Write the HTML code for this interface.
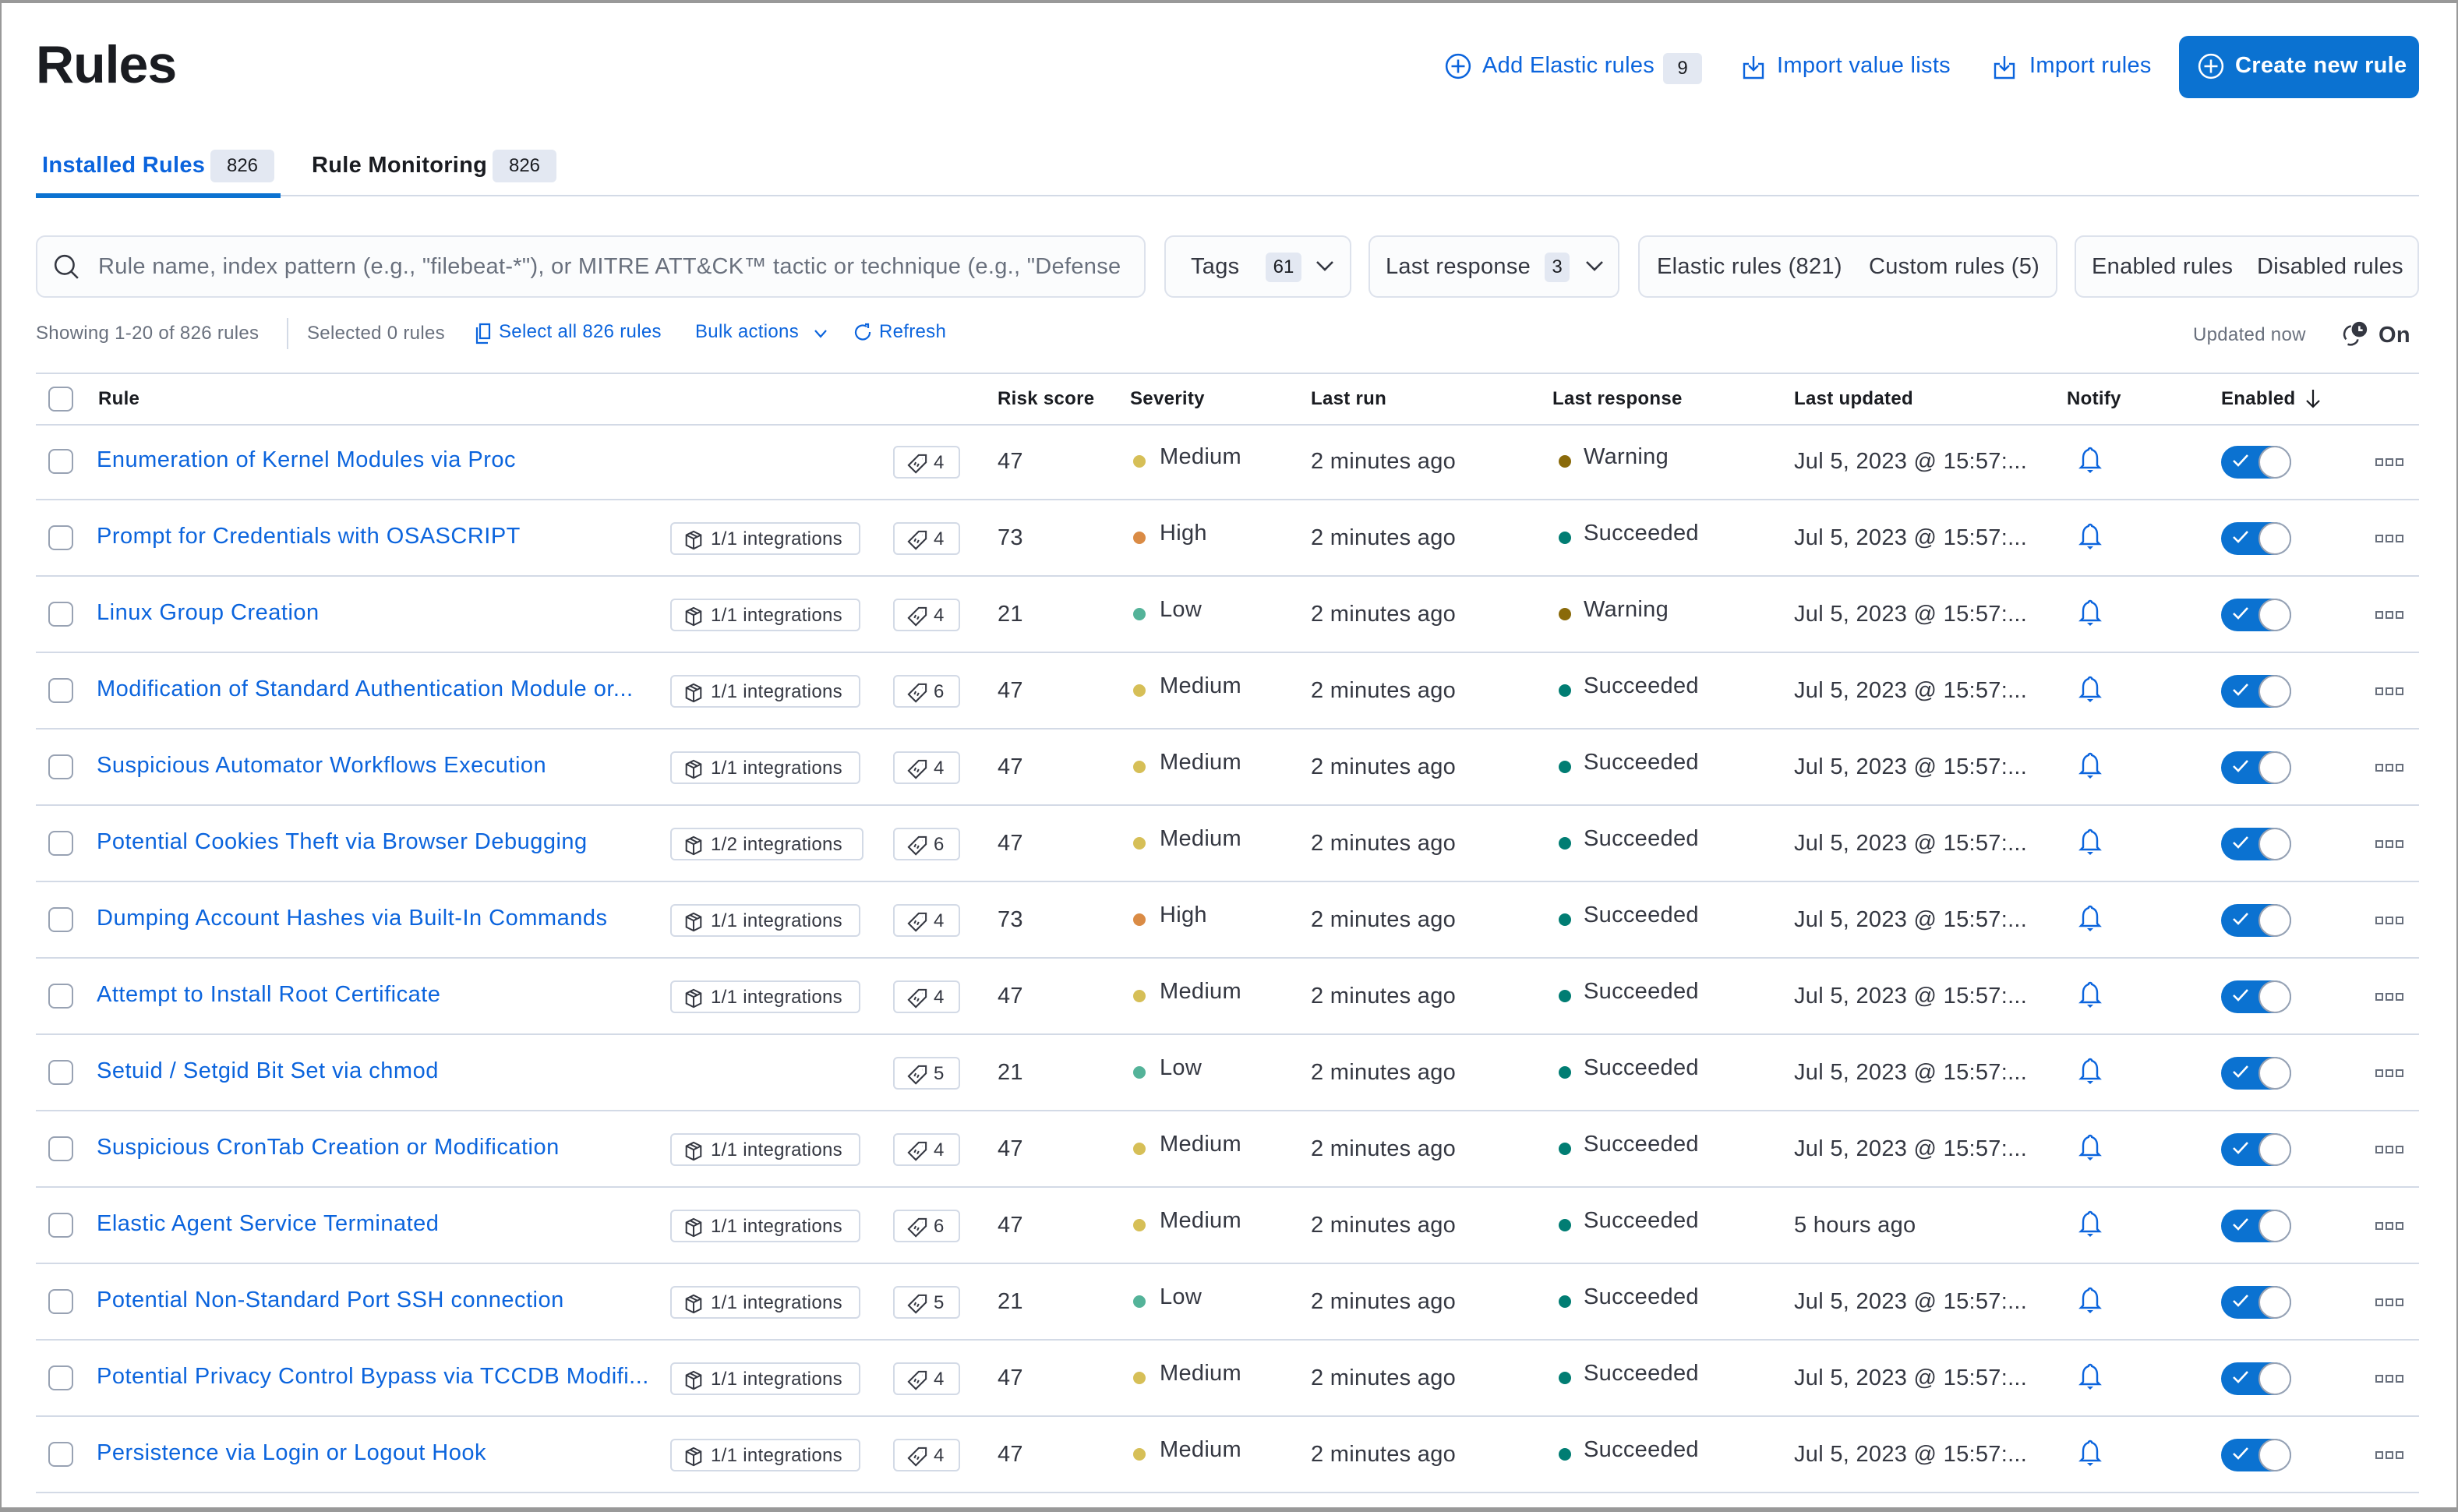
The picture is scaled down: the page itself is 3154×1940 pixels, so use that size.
<!DOCTYPE html>
<html><head><meta charset="utf-8"><style>
*{box-sizing:border-box;margin:0;padding:0}
html,body{width:3154px;height:1940px;overflow:hidden;background:#fff}
#w{zoom:2;width:1577px;height:970px;position:relative;font-family:"Liberation Sans",sans-serif;color:#343741;background:#fff;overflow:hidden;letter-spacing:0.15px}
#frame{position:absolute;left:0;top:0;width:1577px;height:970px;border:1px solid #999;border-top-width:2px;border-bottom-width:3px;pointer-events:none;z-index:5}
.a{position:absolute;white-space:nowrap}
.blue{color:#0b64dd}
.badge{position:absolute;background:#e3e8f2;border-radius:3px;font-size:12px;color:#1a1c21;text-align:center;letter-spacing:0}
.box{position:absolute;border:1px solid #dde2ec;border-radius:6px;background:#fbfcfd;font-size:14.5px;color:#343741}
.row{position:absolute;left:23px;width:1529px;height:49px;border-bottom:1px solid #d3dae6}
.row>*{position:absolute;white-space:nowrap}
.cb{left:8px;top:16px;width:16px;height:16px;border:1px solid #98a2b3;border-radius:4px}
.nm{left:39px;top:15px;font-size:14.5px;color:#0b64dd;letter-spacing:0.25px}
.int{left:407px;top:14px;width:122px;height:21px;border:1px solid #d3dae6;border-radius:3px;font-size:12px;padding:3px 0 0 25px;color:#343741}
.tg{left:550px;top:14px;width:43px;height:21px;border:1px solid #d3dae6;border-radius:3px;font-size:12px;padding:3px 0 0 25px}
.ico{position:absolute;left:8px;top:4px}
.rs{left:617px;top:16px;font-size:14.5px}
.sv{left:721px;top:13px;font-size:14.5px}
.dot{width:8px;height:8px;border-radius:50%;top:20px}
.lr{left:818px;top:16px;font-size:14.5px}
.rp{left:993px;top:13px;font-size:14.5px}
.lu{left:1128px;top:16px;font-size:14.5px}
.bell{left:1310px;top:14px}
.tog{left:1402px;top:14px;width:45px;height:21px;border-radius:11px;background:#0b72d1}
.tog:after{content:"";position:absolute;right:0;top:0;width:21px;height:21px;border-radius:50%;background:#fff;border:1px solid #98a2b3;box-sizing:border-box}
.tog svg{position:absolute;left:7px;top:5px}
.more{left:1501px;top:22px;font-size:0;line-height:0;height:5px}
.more i{display:inline-block;width:5px;height:5px;border:1.2px solid #69707d;margin-right:1.5px;vertical-align:top}
.hd{font-size:12px;font-weight:bold;color:#1a1c21}
</style></head><body><div id="w"><div id="frame"></div>
<div class="a" style="left:23px;top:22px;font-size:34px;font-weight:bold;color:#1a1c21;letter-spacing:-0.5px">Rules</div>

<svg class="a" style="left:927px;top:34px" width="17" height="17" viewBox="0 0 16 16" fill="none" stroke="#0b64dd" stroke-width="1.2"><circle cx="8" cy="8" r="7"/><path d="M8 4v8M4 8h8"/></svg>
<div class="a blue" style="left:951px;top:34px;font-size:14.5px">Add Elastic rules</div>
<div class="badge" style="left:1067px;top:34px;width:25px;height:20px;line-height:20px">9</div>
<svg class="a" style="left:1117px;top:35px" width="16" height="16" viewBox="0 0 16 16" fill="none" stroke="#0b64dd" stroke-width="1.2"><path d="M5 6H2v9h12V6h-3M8 1v9M5 7l3 3 3-3"/></svg>
<div class="a blue" style="left:1140px;top:34px;font-size:14.5px">Import value lists</div>
<svg class="a" style="left:1278px;top:35px" width="16" height="16" viewBox="0 0 16 16" fill="none" stroke="#0b64dd" stroke-width="1.2"><path d="M5 6H2v9h12V6h-3M8 1v9M5 7l3 3 3-3"/></svg>
<div class="a blue" style="left:1302px;top:34px;font-size:14.5px">Import rules</div>
<div class="a" style="left:1398px;top:23px;width:154px;height:40px;background:#0b72d1;border-radius:6px"></div>
<svg class="a" style="left:1410px;top:34px" width="17" height="17" viewBox="0 0 16 16" fill="none" stroke="#fff" stroke-width="1.2"><circle cx="8" cy="8" r="7"/><path d="M8 4v8M4 8h8"/></svg>
<div class="a" style="left:1434px;top:34px;font-size:14.5px;color:#fff;font-weight:bold">Create new rule</div>

<div class="a" style="left:27px;top:98px;font-size:14.5px;font-weight:bold;color:#0b64dd">Installed Rules</div>
<div class="badge" style="left:135px;top:96px;width:41px;height:21px;line-height:21px">826</div>
<div class="a" style="left:200px;top:98px;font-size:14.5px;font-weight:bold;color:#1a1c21">Rule Monitoring</div>
<div class="badge" style="left:316px;top:96px;width:41px;height:21px;line-height:21px">826</div>
<div class="a" style="left:23px;top:125px;width:1529px;height:1px;background:#d3dae6"></div>
<div class="a" style="left:23px;top:124px;width:157px;height:3px;background:#0b72d1"></div>

<div class="box" style="left:23px;top:151px;width:712px;height:40px"></div>
<svg class="a" style="left:34px;top:162px" width="17" height="18" viewBox="0 0 16 16" fill="none" stroke="#343741" stroke-width="1.2"><circle cx="7" cy="7" r="5.5"/><path d="M11 11l4 4"/></svg>
<div class="a" style="left:63px;top:163px;font-size:14.5px;color:#69707d;width:657px;overflow:hidden">Rule name, index pattern (e.g., "filebeat-*"), or MITRE ATT&amp;CK™ tactic or technique (e.g., "Defense Evasion" or "TA0005")</div>

<div class="box" style="left:747px;top:151px;width:120px;height:40px"></div>
<div class="a" style="left:764px;top:163px;font-size:14.5px">Tags</div>
<div class="badge" style="left:812px;top:162px;width:23px;height:19px;line-height:19px">61</div>
<svg class="a" style="left:844px;top:166px" width="12" height="10" viewBox="0 0 12 10" fill="none" stroke="#343741" stroke-width="1.3"><path d="M1 2l5 5 5-5"/></svg>
<div class="box" style="left:878px;top:151px;width:161px;height:40px"></div>
<div class="a" style="left:889px;top:163px;font-size:14.5px">Last response</div>
<div class="badge" style="left:991px;top:162px;width:16px;height:19px;line-height:19px">3</div>
<svg class="a" style="left:1017px;top:166px" width="12" height="10" viewBox="0 0 12 10" fill="none" stroke="#343741" stroke-width="1.3"><path d="M1 2l5 5 5-5"/></svg>
<div class="box" style="left:1051px;top:151px;width:269px;height:40px"></div>
<div class="a" style="left:1063px;top:163px;font-size:14.5px">Elastic rules (821)</div>
<div class="a" style="left:1199px;top:163px;font-size:14.5px">Custom rules (5)</div>
<div class="box" style="left:1331px;top:151px;width:221px;height:40px"></div>
<div class="a" style="left:1342px;top:163px;font-size:14.5px">Enabled rules</div>
<div class="a" style="left:1448px;top:163px;font-size:14.5px">Disabled rules</div>

<div class="a" style="left:23px;top:207px;font-size:12px;color:#69707d">Showing 1-20 of 826 rules</div>
<div class="a" style="left:184px;top:204px;width:1px;height:20px;background:#d3dae6"></div>
<div class="a" style="left:197px;top:207px;font-size:12px;color:#69707d">Selected 0 rules</div>
<svg class="a" style="left:305px;top:207px" width="11" height="14" viewBox="0 0 11 14" fill="none" stroke="#0b64dd" stroke-width="1.1"><path d="M3 1h6v9H3zM1 3v10h7"/></svg>
<div class="a blue" style="left:320px;top:206px;font-size:12px">Select all 826 rules</div>
<div class="a blue" style="left:446px;top:206px;font-size:12px">Bulk actions</div>
<svg class="a" style="left:522px;top:211px" width="9" height="7" viewBox="0 0 9 7" fill="none" stroke="#0b64dd" stroke-width="1.1"><path d="M1 1l3.5 4L8 1"/></svg>
<svg class="a" style="left:548px;top:207px" width="11" height="12" viewBox="0 0 11 12" fill="none" stroke="#0b64dd" stroke-width="1.1"><path d="M8 2.5A4.5 4.5 0 1 0 10 6M7 1h2v2.5"/></svg>
<div class="a blue" style="left:564px;top:206px;font-size:12px">Refresh</div>
<div class="a" style="left:1407px;top:208px;font-size:12px;color:#69707d">Updated now</div>
<svg class="a" style="left:1502px;top:206px" width="17" height="17" viewBox="0 0 16 16" fill="none" stroke="#343741" stroke-width="1.2"><path d="M6 3a5 5 0 0 0-3 8M4 14c3 1 6-1 6-3"/><circle cx="11" cy="5" r="4" fill="#343741"/><path d="M11 3v2.5h2" stroke="#fff"/></svg>
<div class="a" style="left:1526px;top:207px;font-size:14.5px;font-weight:bold">On</div>

<div class="a" style="left:23px;top:239px;width:1529px;height:34px;border-top:1px solid #d3dae6;border-bottom:1px solid #d3dae6">
 <div class="cb" style="position:absolute;top:8px"></div>
 <div class="a hd" style="left:40px;top:9px">Rule</div>
 <div class="a hd" style="left:617px;top:9px">Risk score</div>
 <div class="a hd" style="left:702px;top:9px">Severity</div>
 <div class="a hd" style="left:818px;top:9px">Last run</div>
 <div class="a hd" style="left:973px;top:9px">Last response</div>
 <div class="a hd" style="left:1128px;top:9px">Last updated</div>
 <div class="a hd" style="left:1303px;top:9px">Notify</div>
 <div class="a hd" style="left:1402px;top:9px">Enabled</div>
 <svg class="a" style="left:1456px;top:10px" width="10" height="12" viewBox="0 0 10 12" fill="none" stroke="#1a1c21" stroke-width="1.1"><path d="M5 0v11M1 7l4 4 4-4"/></svg>
</div>

<svg width="0" height="0" style="position:absolute"><defs>
<symbol id="tag" viewBox="0 0 14 14"><path d="M8 1h5v5l-7 7-5-5z M10.5 3.5h.1 M5 8l1-2M7 9l1-2" fill="none" stroke="#343741" stroke-width="1.1"/></symbol>
<symbol id="pkg" viewBox="0 0 12 14"><path d="M6 1l5 2.5v7L6 13 1 10.5v-7zM1 3.5L6 6l5-2.5M6 6v7M3.5 2.2l5 2.5" fill="none" stroke="#343741" stroke-width="1.1"/></symbol>
<symbol id="bell" viewBox="0 0 16 18"><path d="M8 1.5c-.7 0-1.1.5-1.1 1C4.5 3.3 3.5 5.5 3.5 8v4.5L2 14h12l-1.5-1.5V8c0-2.5-1-4.7-3.4-5.5 0-.5-.4-1-1.1-1z" fill="none" stroke="#0b64dd" stroke-width="1.2"/><path d="M6 15.5h4l-2 2z" fill="#0b64dd"/></symbol>
</defs></svg>

<div class="row" style="top:272px"><div class="cb"></div><div class="nm">Enumeration of Kernel Modules via Proc</div><div class="tg"><svg class="ico" width="13" height="13"><use href="#tag"/></svg>4</div><div class="rs">47</div><div class="dot" style="left:704px;background:#d6bf57"></div><div class="sv">Medium</div><div class="lr">2 minutes ago</div><div class="dot" style="left:977px;background:#8a6a0a"></div><div class="rp">Warning</div><div class="lu">Jul 5, 2023 @ 15:57:...</div><svg class="bell" width="16" height="18"><use href="#bell"/></svg><div class="tog"><svg width="11" height="9" viewBox="0 0 11 9" fill="none" stroke="#fff" stroke-width="1.3"><path d="M1 4.5l3 3L10 1"/></svg></div><div class="more"><i></i><i></i><i></i></div></div>
<div class="row" style="top:321px"><div class="cb"></div><div class="nm">Prompt for Credentials with OSASCRIPT</div><div class="int"><svg class="ico" width="12" height="13"><use href="#pkg"/></svg>1/1 integrations</div><div class="tg"><svg class="ico" width="13" height="13"><use href="#tag"/></svg>4</div><div class="rs">73</div><div class="dot" style="left:704px;background:#da8b45"></div><div class="sv">High</div><div class="lr">2 minutes ago</div><div class="dot" style="left:977px;background:#017d73"></div><div class="rp">Succeeded</div><div class="lu">Jul 5, 2023 @ 15:57:...</div><svg class="bell" width="16" height="18"><use href="#bell"/></svg><div class="tog"><svg width="11" height="9" viewBox="0 0 11 9" fill="none" stroke="#fff" stroke-width="1.3"><path d="M1 4.5l3 3L10 1"/></svg></div><div class="more"><i></i><i></i><i></i></div></div>
<div class="row" style="top:370px"><div class="cb"></div><div class="nm">Linux Group Creation</div><div class="int"><svg class="ico" width="12" height="13"><use href="#pkg"/></svg>1/1 integrations</div><div class="tg"><svg class="ico" width="13" height="13"><use href="#tag"/></svg>4</div><div class="rs">21</div><div class="dot" style="left:704px;background:#54b399"></div><div class="sv">Low</div><div class="lr">2 minutes ago</div><div class="dot" style="left:977px;background:#8a6a0a"></div><div class="rp">Warning</div><div class="lu">Jul 5, 2023 @ 15:57:...</div><svg class="bell" width="16" height="18"><use href="#bell"/></svg><div class="tog"><svg width="11" height="9" viewBox="0 0 11 9" fill="none" stroke="#fff" stroke-width="1.3"><path d="M1 4.5l3 3L10 1"/></svg></div><div class="more"><i></i><i></i><i></i></div></div>
<div class="row" style="top:419px"><div class="cb"></div><div class="nm">Modification of Standard Authentication Module or...</div><div class="int"><svg class="ico" width="12" height="13"><use href="#pkg"/></svg>1/1 integrations</div><div class="tg"><svg class="ico" width="13" height="13"><use href="#tag"/></svg>6</div><div class="rs">47</div><div class="dot" style="left:704px;background:#d6bf57"></div><div class="sv">Medium</div><div class="lr">2 minutes ago</div><div class="dot" style="left:977px;background:#017d73"></div><div class="rp">Succeeded</div><div class="lu">Jul 5, 2023 @ 15:57:...</div><svg class="bell" width="16" height="18"><use href="#bell"/></svg><div class="tog"><svg width="11" height="9" viewBox="0 0 11 9" fill="none" stroke="#fff" stroke-width="1.3"><path d="M1 4.5l3 3L10 1"/></svg></div><div class="more"><i></i><i></i><i></i></div></div>
<div class="row" style="top:468px"><div class="cb"></div><div class="nm">Suspicious Automator Workflows Execution</div><div class="int"><svg class="ico" width="12" height="13"><use href="#pkg"/></svg>1/1 integrations</div><div class="tg"><svg class="ico" width="13" height="13"><use href="#tag"/></svg>4</div><div class="rs">47</div><div class="dot" style="left:704px;background:#d6bf57"></div><div class="sv">Medium</div><div class="lr">2 minutes ago</div><div class="dot" style="left:977px;background:#017d73"></div><div class="rp">Succeeded</div><div class="lu">Jul 5, 2023 @ 15:57:...</div><svg class="bell" width="16" height="18"><use href="#bell"/></svg><div class="tog"><svg width="11" height="9" viewBox="0 0 11 9" fill="none" stroke="#fff" stroke-width="1.3"><path d="M1 4.5l3 3L10 1"/></svg></div><div class="more"><i></i><i></i><i></i></div></div>
<div class="row" style="top:517px"><div class="cb"></div><div class="nm">Potential Cookies Theft via Browser Debugging</div><div class="int" style="width:124px"><svg class="ico" width="12" height="13"><use href="#pkg"/></svg>1/2 integrations</div><div class="tg"><svg class="ico" width="13" height="13"><use href="#tag"/></svg>6</div><div class="rs">47</div><div class="dot" style="left:704px;background:#d6bf57"></div><div class="sv">Medium</div><div class="lr">2 minutes ago</div><div class="dot" style="left:977px;background:#017d73"></div><div class="rp">Succeeded</div><div class="lu">Jul 5, 2023 @ 15:57:...</div><svg class="bell" width="16" height="18"><use href="#bell"/></svg><div class="tog"><svg width="11" height="9" viewBox="0 0 11 9" fill="none" stroke="#fff" stroke-width="1.3"><path d="M1 4.5l3 3L10 1"/></svg></div><div class="more"><i></i><i></i><i></i></div></div>
<div class="row" style="top:566px"><div class="cb"></div><div class="nm">Dumping Account Hashes via Built-In Commands</div><div class="int"><svg class="ico" width="12" height="13"><use href="#pkg"/></svg>1/1 integrations</div><div class="tg"><svg class="ico" width="13" height="13"><use href="#tag"/></svg>4</div><div class="rs">73</div><div class="dot" style="left:704px;background:#da8b45"></div><div class="sv">High</div><div class="lr">2 minutes ago</div><div class="dot" style="left:977px;background:#017d73"></div><div class="rp">Succeeded</div><div class="lu">Jul 5, 2023 @ 15:57:...</div><svg class="bell" width="16" height="18"><use href="#bell"/></svg><div class="tog"><svg width="11" height="9" viewBox="0 0 11 9" fill="none" stroke="#fff" stroke-width="1.3"><path d="M1 4.5l3 3L10 1"/></svg></div><div class="more"><i></i><i></i><i></i></div></div>
<div class="row" style="top:615px"><div class="cb"></div><div class="nm">Attempt to Install Root Certificate</div><div class="int"><svg class="ico" width="12" height="13"><use href="#pkg"/></svg>1/1 integrations</div><div class="tg"><svg class="ico" width="13" height="13"><use href="#tag"/></svg>4</div><div class="rs">47</div><div class="dot" style="left:704px;background:#d6bf57"></div><div class="sv">Medium</div><div class="lr">2 minutes ago</div><div class="dot" style="left:977px;background:#017d73"></div><div class="rp">Succeeded</div><div class="lu">Jul 5, 2023 @ 15:57:...</div><svg class="bell" width="16" height="18"><use href="#bell"/></svg><div class="tog"><svg width="11" height="9" viewBox="0 0 11 9" fill="none" stroke="#fff" stroke-width="1.3"><path d="M1 4.5l3 3L10 1"/></svg></div><div class="more"><i></i><i></i><i></i></div></div>
<div class="row" style="top:664px"><div class="cb"></div><div class="nm">Setuid / Setgid Bit Set via chmod</div><div class="tg"><svg class="ico" width="13" height="13"><use href="#tag"/></svg>5</div><div class="rs">21</div><div class="dot" style="left:704px;background:#54b399"></div><div class="sv">Low</div><div class="lr">2 minutes ago</div><div class="dot" style="left:977px;background:#017d73"></div><div class="rp">Succeeded</div><div class="lu">Jul 5, 2023 @ 15:57:...</div><svg class="bell" width="16" height="18"><use href="#bell"/></svg><div class="tog"><svg width="11" height="9" viewBox="0 0 11 9" fill="none" stroke="#fff" stroke-width="1.3"><path d="M1 4.5l3 3L10 1"/></svg></div><div class="more"><i></i><i></i><i></i></div></div>
<div class="row" style="top:713px"><div class="cb"></div><div class="nm">Suspicious CronTab Creation or Modification</div><div class="int"><svg class="ico" width="12" height="13"><use href="#pkg"/></svg>1/1 integrations</div><div class="tg"><svg class="ico" width="13" height="13"><use href="#tag"/></svg>4</div><div class="rs">47</div><div class="dot" style="left:704px;background:#d6bf57"></div><div class="sv">Medium</div><div class="lr">2 minutes ago</div><div class="dot" style="left:977px;background:#017d73"></div><div class="rp">Succeeded</div><div class="lu">Jul 5, 2023 @ 15:57:...</div><svg class="bell" width="16" height="18"><use href="#bell"/></svg><div class="tog"><svg width="11" height="9" viewBox="0 0 11 9" fill="none" stroke="#fff" stroke-width="1.3"><path d="M1 4.5l3 3L10 1"/></svg></div><div class="more"><i></i><i></i><i></i></div></div>
<div class="row" style="top:762px"><div class="cb"></div><div class="nm">Elastic Agent Service Terminated</div><div class="int"><svg class="ico" width="12" height="13"><use href="#pkg"/></svg>1/1 integrations</div><div class="tg"><svg class="ico" width="13" height="13"><use href="#tag"/></svg>6</div><div class="rs">47</div><div class="dot" style="left:704px;background:#d6bf57"></div><div class="sv">Medium</div><div class="lr">2 minutes ago</div><div class="dot" style="left:977px;background:#017d73"></div><div class="rp">Succeeded</div><div class="lu">5 hours ago</div><svg class="bell" width="16" height="18"><use href="#bell"/></svg><div class="tog"><svg width="11" height="9" viewBox="0 0 11 9" fill="none" stroke="#fff" stroke-width="1.3"><path d="M1 4.5l3 3L10 1"/></svg></div><div class="more"><i></i><i></i><i></i></div></div>
<div class="row" style="top:811px"><div class="cb"></div><div class="nm">Potential Non-Standard Port SSH connection</div><div class="int"><svg class="ico" width="12" height="13"><use href="#pkg"/></svg>1/1 integrations</div><div class="tg"><svg class="ico" width="13" height="13"><use href="#tag"/></svg>5</div><div class="rs">21</div><div class="dot" style="left:704px;background:#54b399"></div><div class="sv">Low</div><div class="lr">2 minutes ago</div><div class="dot" style="left:977px;background:#017d73"></div><div class="rp">Succeeded</div><div class="lu">Jul 5, 2023 @ 15:57:...</div><svg class="bell" width="16" height="18"><use href="#bell"/></svg><div class="tog"><svg width="11" height="9" viewBox="0 0 11 9" fill="none" stroke="#fff" stroke-width="1.3"><path d="M1 4.5l3 3L10 1"/></svg></div><div class="more"><i></i><i></i><i></i></div></div>
<div class="row" style="top:860px"><div class="cb"></div><div class="nm">Potential Privacy Control Bypass via TCCDB Modifi...</div><div class="int"><svg class="ico" width="12" height="13"><use href="#pkg"/></svg>1/1 integrations</div><div class="tg"><svg class="ico" width="13" height="13"><use href="#tag"/></svg>4</div><div class="rs">47</div><div class="dot" style="left:704px;background:#d6bf57"></div><div class="sv">Medium</div><div class="lr">2 minutes ago</div><div class="dot" style="left:977px;background:#017d73"></div><div class="rp">Succeeded</div><div class="lu">Jul 5, 2023 @ 15:57:...</div><svg class="bell" width="16" height="18"><use href="#bell"/></svg><div class="tog"><svg width="11" height="9" viewBox="0 0 11 9" fill="none" stroke="#fff" stroke-width="1.3"><path d="M1 4.5l3 3L10 1"/></svg></div><div class="more"><i></i><i></i><i></i></div></div>
<div class="row" style="top:909px"><div class="cb"></div><div class="nm">Persistence via Login or Logout Hook</div><div class="int"><svg class="ico" width="12" height="13"><use href="#pkg"/></svg>1/1 integrations</div><div class="tg"><svg class="ico" width="13" height="13"><use href="#tag"/></svg>4</div><div class="rs">47</div><div class="dot" style="left:704px;background:#d6bf57"></div><div class="sv">Medium</div><div class="lr">2 minutes ago</div><div class="dot" style="left:977px;background:#017d73"></div><div class="rp">Succeeded</div><div class="lu">Jul 5, 2023 @ 15:57:...</div><svg class="bell" width="16" height="18"><use href="#bell"/></svg><div class="tog"><svg width="11" height="9" viewBox="0 0 11 9" fill="none" stroke="#fff" stroke-width="1.3"><path d="M1 4.5l3 3L10 1"/></svg></div><div class="more"><i></i><i></i><i></i></div></div>
</div></body></html>
